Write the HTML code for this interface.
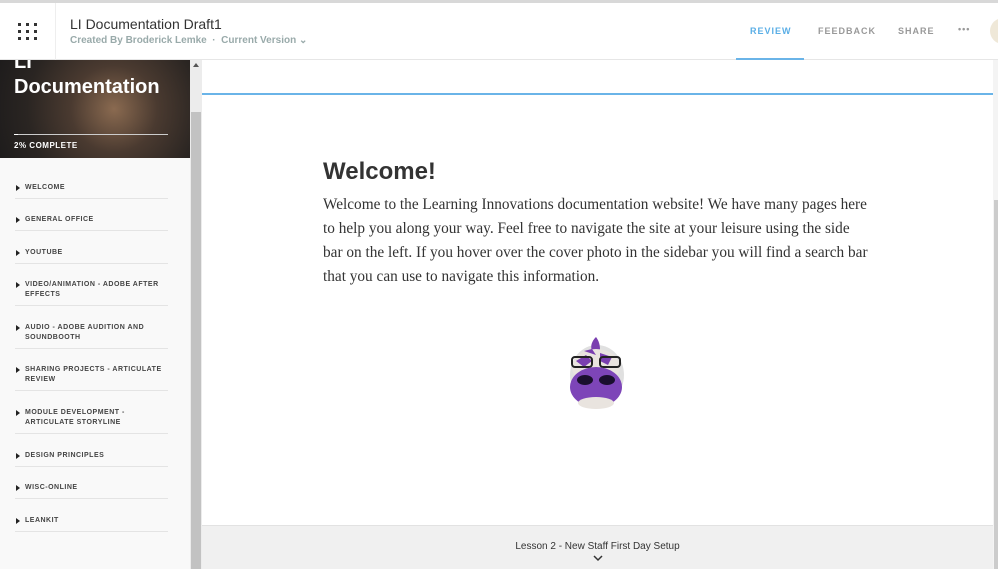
<!DOCTYPE html>
<html><head><style>
*{margin:0;padding:0;box-sizing:border-box}
body{width:998px;height:569px;overflow:hidden;background:#fff;font-family:"Liberation Sans",sans-serif;position:relative}
.top{position:absolute;left:0;top:0;width:998px;height:3px;background:#d8d8d8}
.hdr{position:absolute;left:0;top:3px;width:998px;height:57px;background:#fff;border-bottom:1px solid #e6e6e6}
.grid{position:absolute;left:18px;top:23px;width:20px;height:18px}
.grid i{position:absolute;width:3px;height:3px;background:#333}
.sep{position:absolute;left:55px;top:3px;width:1px;height:57px;background:#eee}
.title{position:absolute;left:70px;top:16px;font-size:14px;color:#333}
.sub{position:absolute;left:70px;top:35px;font-size:10px;color:#9aa;font-weight:bold}
.nav{position:absolute;top:26px;font-size:9px;letter-spacing:1px;font-weight:bold;color:#999}
.ul{position:absolute;left:736px;top:58px;width:68px;height:2px;background:#6ab4e8}
.av{position:absolute;left:990px;top:18px;width:26px;height:26px;border-radius:50%;background:#efe8d8}
.side{position:absolute;left:0;top:60px;width:190px;height:509px;background:#f9f9f9}
.cover{position:absolute;left:0;top:60px;width:190px;height:98px;background:radial-gradient(circle at 60% 50%,#8a6a50 0%,#4a3a30 35%,#2a2522 70%,#1e1c1c 100%);overflow:hidden}
.cover h1{position:absolute;left:14px;top:-10px;font-size:20px;color:#fff;line-height:25px;font-weight:bold}
.bar{position:absolute;left:14px;top:74px;width:154px;height:1px;background:#ccc}
.bar b{display:block;width:4px;height:1px;background:#fff}
.pc{position:absolute;left:14px;top:81px;font-size:8px;font-weight:bold;color:#fff;letter-spacing:.5px}
.item{position:absolute;left:15px;width:153px;border-bottom:1px solid #e4e4e4;font-size:7px;font-weight:bold;color:#444;letter-spacing:.5px;line-height:10px;padding-left:10px;padding-top:2px}
.item:before{content:"";position:absolute;left:1px;top:4px;border-left:4px solid #222;border-top:3px solid transparent;border-bottom:3px solid transparent}
.sb{position:absolute;left:190px;top:60px;width:12px;height:509px;background:#ececec}
.thumb{position:absolute;left:191px;top:112px;width:10px;height:457px;background:#c2c2c2}
.blue{position:absolute;left:202px;top:93px;width:791px;height:2px;background:#6ab4e8}
.rsb{position:absolute;left:993px;top:60px;width:5px;height:509px;background:#f4f4f4}
.rth{position:absolute;left:994px;top:200px;width:4px;height:369px;background:#ccc}
h2{position:absolute;left:323px;top:158px;font-size:24px;color:#333;font-family:"Liberation Sans",sans-serif}
.p{position:absolute;left:323px;top:193px;white-space:nowrap;font-family:"Liberation Serif",serif;font-size:15.3px;line-height:24px;color:#333}
.foot{position:absolute;left:202px;top:525px;width:791px;height:44px;background:#f0f0f0;border-top:1px solid #e2e2e2;text-align:center;font-size:10px;color:#333}
</style></head><body>
<div class="top"></div>
<div class="hdr"></div>
<div class="grid">
<i style="left:0;top:0"></i><i style="left:8px;top:0"></i><i style="left:16px;top:0"></i>
<i style="left:0;top:7px"></i><i style="left:8px;top:7px"></i><i style="left:16px;top:7px"></i>
<i style="left:0;top:14px"></i><i style="left:8px;top:14px"></i><i style="left:16px;top:14px"></i></div>
<div class="sep"></div>
<div class="title">LI Documentation Draft1</div>
<div class="sub">Created By Broderick Lemke &nbsp;·&nbsp; Current Version ⌄</div>
<div class="nav" style="left:750px;color:#5aaee6">REVIEW</div>
<div class="nav" style="left:818px">FEEDBACK</div>
<div class="nav" style="left:898px">SHARE</div>
<div class="nav" style="left:958px;top:24px">•••</div>
<div class="ul"></div>
<div class="av"></div>
<div class="side"></div>
<div class="cover"><h1>LI<br>Documentation</h1><div class="bar"><b></b></div><div class="pc">2% COMPLETE</div></div>
<div class="item" style="top:181px;height:18px">WELCOME</div>
<div class="item" style="top:213px;height:18px">GENERAL OFFICE</div>
<div class="item" style="top:246px;height:18px">YOUTUBE</div>
<div class="item" style="top:278px;height:28px">VIDEO/ANIMATION - ADOBE AFTER EFFECTS</div>
<div class="item" style="top:321px;height:28px">AUDIO - ADOBE AUDITION AND SOUNDBOOTH</div>
<div class="item" style="top:363px;height:28px">SHARING PROJECTS - ARTICULATE REVIEW</div>
<div class="item" style="top:406px;height:28px">MODULE DEVELOPMENT - ARTICULATE STORYLINE</div>
<div class="item" style="top:449px;height:18px">DESIGN PRINCIPLES</div>
<div class="item" style="top:481px;height:18px">WISC-ONLINE</div>
<div class="item" style="top:514px;height:18px">LEANKIT</div>
<div class="sb"></div><div class="thumb"></div>
<div style="position:absolute;left:193px;top:63px;border-bottom:4px solid #555;border-left:3px solid transparent;border-right:3px solid transparent"></div>
<div class="blue"></div>
<div class="rsb"></div><div class="rth"></div>
<h2>Welcome!</h2>
<div class="p">Welcome to the Learning Innovations documentation website! We have many pages here<br>to help you along your way. Feel free to navigate the site at your leisure using the side<br>bar on the left. If you hover over the cover photo in the sidebar you will find a search bar<br>that you can use to navigate this information.</div>
<svg style="position:absolute;left:560px;top:333px" width="72" height="80" viewBox="0 0 72 80">
<ellipse cx="37" cy="42" rx="27" ry="30" fill="#000" opacity=".12"/>
<path d="M36 4c-4 4-6 9-4 14l8-1c0-5-1-9-4-13z" fill="#7a3fb0"/>
<ellipse cx="36" cy="34" rx="24" ry="18" fill="#e9e4df"/>
<path d="M16 28l10-6 6 6-8 6zM40 20l12 4-4 8-8-4zM24 18l8-2 4 6z" fill="#7a3fb0"/>
<rect x="12" y="24" width="20" height="10" rx="3" fill="none" stroke="#222" stroke-width="2"/>
<rect x="40" y="24" width="20" height="10" rx="3" fill="none" stroke="#222" stroke-width="2"/>
<ellipse cx="36" cy="54" rx="26" ry="20" fill="#7d45b8"/>
<ellipse cx="36" cy="70" rx="18" ry="6" fill="#e9e4df"/>
<ellipse cx="25" cy="47" rx="8" ry="5" fill="#1a0f2e"/>
<ellipse cx="47" cy="47" rx="8" ry="5" fill="#1a0f2e"/>
</svg>
<div class="foot"><div style="margin-top:15px">Lesson 2 - New Staff First Day Setup</div>
<svg width="10" height="7" style="margin-top:3px"><path d="M1 1l4 4 4-4" fill="none" stroke="#333" stroke-width="1.5"/></svg></div>
</body></html>
